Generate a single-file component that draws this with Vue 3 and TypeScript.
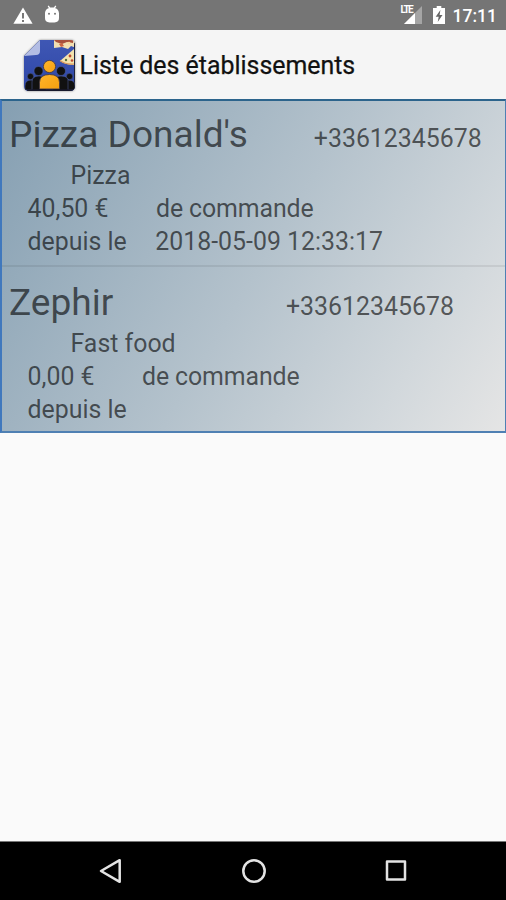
<script setup lang="ts">
interface Place {
  name: string
  phone: string
  kind: string
  amount: string
  since: string
}

const places: Place[] = [
  { name: "Pizza Donald's", phone: '+33612345678', kind: 'Pizza', amount: '40,50 €', since: '2018-05-09 12:33:17' },
  { name: 'Zephir', phone: '+33612345678', kind: 'Fast food', amount: '0,00 €', since: '' },
]
</script>

<template>
  <div class="screen">
    <header class="status">
      <svg class="warn" viewBox="0 0 20 17"><path d="M10 0.5 19.6 16.8H.4Z" fill="#fff" /><path d="M10 6v5.4M10 13v2" stroke="#6b6b6b" stroke-width="1.8" /></svg>
      <svg class="droid" viewBox="0 0 16 18">
        <path d="M4.2 0.8 6 3.6M11.8 0.8 10 3.6" stroke="#fff" stroke-width="1.3" />
        <path d="M1 8.5C1 4.5 3.8 2.4 8 2.4s7 2.1 7 6.1ZM1 8h14v5q0 4.4-4.5 4.4H5.5q-4.5 0-4.5-4.4Z" fill="#fff" />
        <circle cx="5" cy="8.8" r="1" fill="#777" /><circle cx="11" cy="8.8" r="1" fill="#777" />
      </svg>
      <span class="spacer"></span>
      <span class="signal">
        <svg viewBox="0 0 18 18"><path d="M18 0v18H0Z" fill="#a5a5a5" /><path d="M11 7v11H0Z" fill="#fff" /></svg>
        <span class="lte">LTE</span>
      </span>
      <svg class="battery" viewBox="0 0 12 18"><path d="M3.7 0h4.6v2H12v16H0V2h3.7Z" fill="#fff" /><path d="M7.4 4 2.7 10.8h3L4.7 16l4.8-7H6.6Z" fill="#666" /></svg>
      <span class="clock">17:11</span>
    </header>

    <div class="appbar">
      <svg class="logo" viewBox="0 0 52 52">
        <defs>
          <clipPath id="tile"><path d="M16 0H46Q51 0 51 5V46Q51 51 46 51H5Q0 51 0 46V16Z" /></clipPath>
          <linearGradient id="gold" x2="1" y2="1"><stop stop-color="#ffb52a" /><stop offset="1" stop-color="#f5a010" /></linearGradient>
          <linearGradient id="blue" x2="0" y2="1"><stop stop-color="#3f57b4" /><stop offset="1" stop-color="#2d46a7" /></linearGradient>
        </defs>
        <g clip-path="url(#tile)">
          <path d="M0 0H52V52H0Z" fill="url(#blue)" />
          <path d="M0 16 16 0V11Q16 15 12 15Z" fill="#b3bde4" />
          <path d="M30 0H52V8L47 6 44 9 38 7 30 8Z" fill="#f2dfb2" />
          <path d="M30 0H49V3L43 2 38 4 32 2Z" fill="#a9503c" />
          <path d="M35 4l3-1 2 3-3 1Z" fill="#cc6543" />
          <path d="M50 9 36 21Q42 25 50 25Z" fill="#f4e3ae" />
          <path d="M36 20.5Q42 25 50 24" fill="none" stroke="#d79a5c" stroke-width="1.2" />
          <circle cx="46" cy="16" r="1.4" fill="#bd4a31" /><circle cx="42" cy="20" r="1.2" fill="#59703b" />
          <circle cx="48" cy="20.5" r="1.3" fill="#bd4a31" /><circle cx="45" cy="3" r="1.3" fill="#f7d49b" />
          <path d="M50.5 3v45" stroke="#20243c" />
          <g fill="#111" stroke="#5566a8" stroke-width="0.5">
            <path d="M1 50v-4q0-6 6-6t6 6v4ZM38 50v-4q0-6 6.5-6t6.5 6v4Z" />
            <circle cx="6.5" cy="36.5" r="3.2" /><circle cx="45.5" cy="36.5" r="3.2" />
            <path d="M8 51V42q0-6 7-6t7 6v9ZM29 51V42q0-6 8-6t7 6v9Z" />
            <circle cx="14.5" cy="31" r="4.5" /><circle cx="37" cy="31" r="4.5" />
          </g>
          <g fill="url(#gold)" stroke="#463b45" stroke-width="0.9">
            <path d="M15.5 49V42.500q0-8 10-8t10 8v6.500Z" /><circle cx="25.5" cy="26.5" r="6.1" />
          </g>
          <path d="M3 50.3H49" stroke="#18192b" stroke-width="2" />
        </g>
      </svg>
      <h1 class="title">Liste des établissements</h1>
    </div>

    <main class="list">
      <section v-for="place in places" :key="place.name" class="row">
        <div class="head">
          <span class="name">{{ place.name }}</span>
          <span class="phone">{{ place.phone }}</span>
        </div>
        <div class="kind">{{ place.kind }}</div>
        <div class="details">
          <span class="amount">{{ place.amount }}</span>
          <span class="label">de commande</span>
        </div>
        <div class="details">
          <span class="since">depuis le</span>
          <span>{{ place.since }}</span>
        </div>
      </section>
    </main>

    <nav class="navbar">
      <svg viewBox="0 0 24 26"><path d="M20.7 2.2V23.8L2 13Z" /></svg>
      <svg viewBox="0 0 24 26"><circle cx="12" cy="13" r="10.7" /></svg>
      <svg viewBox="0 0 24 26"><rect x="3" y="3.6" width="18" height="18" /></svg>
    </nav>
  </div>
</template>

<style>
body {
  margin: 0;
}
</style>

<style scoped>
.screen {
  width: 506px;
  height: 900px;
  display: flex;
  flex-direction: column;
  background: #fafafa;
  font-family: Roboto, sans-serif;
  overflow: hidden;
}
.status {
  height: 30px;
  box-sizing: border-box;
  padding: 0 9px 0 13px;
  display: flex;
  align-items: center;
  flex: none;
  background: #757575;
}
.warn {
  width: 20px;
  height: 17px;
}
.droid {
  width: 16px;
  height: 18px;
  margin: 0 0 2px 11px;
}
.spacer {
  flex: 1;
}
.signal {
  position: relative;
  width: 22px;
  height: 19px;
}
.signal svg {
  display: block;
  width: 18px;
  height: 18px;
  margin: 0 0 0 4px;
}
.lte {
  position: absolute;
  left: 1px;
  top: -1px;
  padding-right: 1px;
  background: #757575;
  color: #fff;
  font-size: 10px;
  line-height: 9px;
  font-weight: 700;
  letter-spacing: -1.5px;
}
.battery {
  width: 12px;
  height: 18px;
  margin: 0 8px 0 11px;
}
.clock {
  color: #fff;
  font-size: 17.5px;
  font-weight: 500;
  line-height: 30px;
  padding-top: 2px;
}
.appbar {
  height: 69px;
  box-sizing: border-box;
  padding: 2px 0 0 24px;
  display: flex;
  align-items: center;
  flex: none;
  background: #f5f5f5;
}
.logo {
  width: 52px;
  height: 52px;
  margin-right: 3.5px;
  filter: drop-shadow(0 0 1px #888);
}
.title {
  margin: 0;
  font-size: 24.9px;
  font-weight: 400;
  line-height: 34px;
  color: #111;
  -webkit-text-stroke: 0.25px #111;
}
.list {
  flex: none;
  box-sizing: border-box;
  height: 334px;
  border: solid #4f80b3;
  border-width: 2px 1px 2px 2px;
  border-top-color: #2c648c;
  border-left-color: #4078bd;
  background: linear-gradient(121deg, #859fb2 0%, #b4c2cc 51%, #d2d8dc 81%, #e5e5e5 100%);
  color: rgba(0, 0, 0, 0.61);
  font-size: 24.9px;
  line-height: 33.3px;
}
.row {
  height: 164px;
  box-sizing: border-box;
  padding: 9px 0 0 7px;
}
.row + .row {
  border-top: 2px solid rgba(0, 0, 0, 0.07);
  height: 166px;
  padding-top: 11px;
}
.head {
  display: flex;
  align-items: baseline;
  height: 48.5px;
  line-height: 50px;
}
.name {
  font-size: 37.1px;
  min-width: 211px;
  margin-right: 66px;
}
.kind {
  padding-left: 61.5px;
}
.details {
  display: flex;
  padding-left: 18.5px;
}
.amount {
  margin-right: 47.5px;
}
.label {
  letter-spacing: -0.12px;
}
.since {
  margin-right: 28.5px;
}
.navbar {
  margin-top: auto;
  height: 59px;
  box-sizing: border-box;
  border-top: 1px solid #777;
  padding: 0 98px 0 99px;
  display: flex;
  align-items: center;
  justify-content: space-between;
  background: #000;
}
.navbar svg {
  width: 24px;
  height: 26px;
  fill: none;
  stroke: #e3e3e3;
  stroke-width: 2.5;
  stroke-linejoin: round;
}
</style>
